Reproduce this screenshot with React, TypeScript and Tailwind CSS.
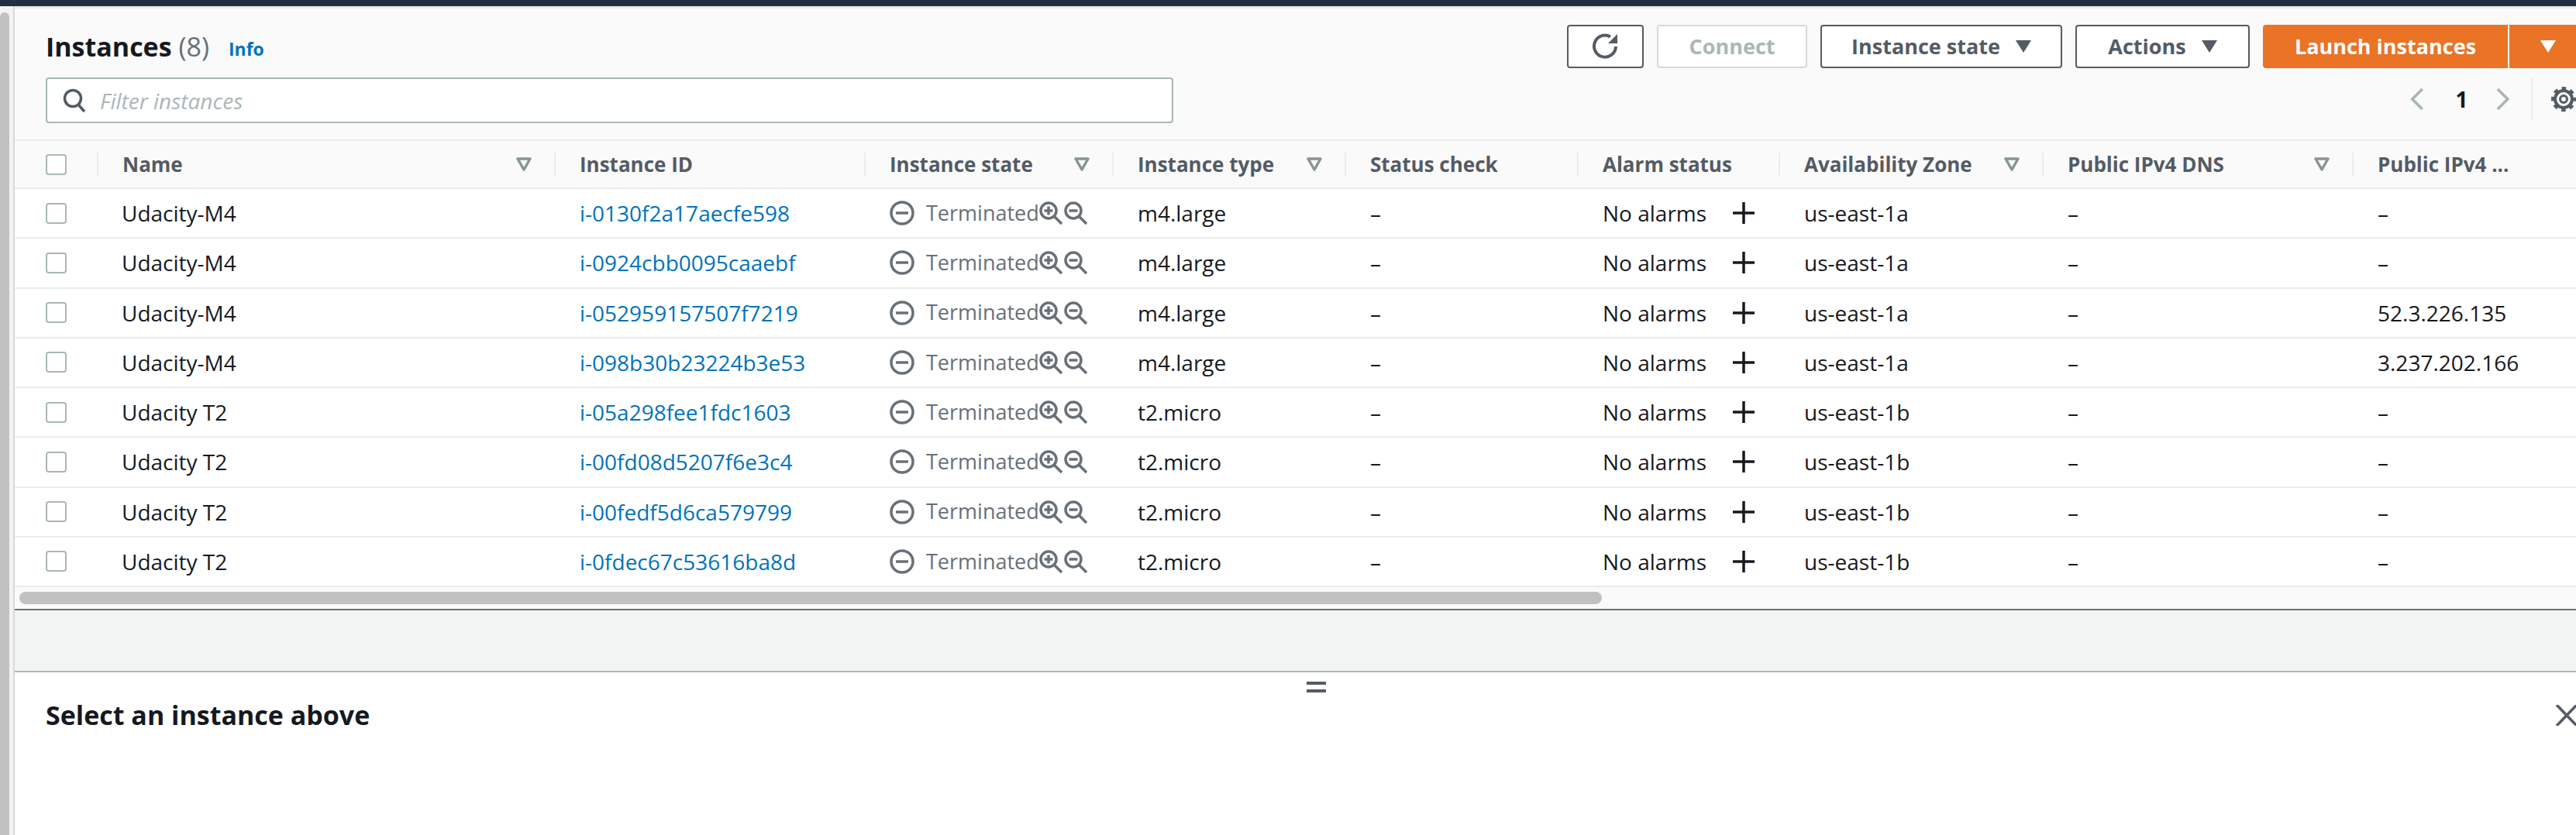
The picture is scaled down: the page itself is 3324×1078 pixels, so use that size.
const font = "font-['Open_Sans','Noto_Sans',sans-serif]"

const columns = 'grid grid-cols-[106px_590px_400px_320px_300px_300px_260px_340px_400px_360px]'

type Instance = {
  name: string
  id: string
  type: string
  zone: string
  ip: string
}

const instances: Instance[] = [
  { name: 'Udacity-M4', id: 'i-0130f2a17aecfe598', type: 'm4.large', zone: 'us-east-1a', ip: '–' },
  { name: 'Udacity-M4', id: 'i-0924cbb0095caaebf', type: 'm4.large', zone: 'us-east-1a', ip: '–' },
  { name: 'Udacity-M4', id: 'i-052959157507f7219', type: 'm4.large', zone: 'us-east-1a', ip: '52.3.226.135' },
  { name: 'Udacity-M4', id: 'i-098b30b23224b3e53', type: 'm4.large', zone: 'us-east-1a', ip: '3.237.202.166' },
  { name: 'Udacity T2', id: 'i-05a298fee1fdc1603', type: 't2.micro', zone: 'us-east-1b', ip: '–' },
  { name: 'Udacity T2', id: 'i-00fd08d5207f6e3c4', type: 't2.micro', zone: 'us-east-1b', ip: '–' },
  { name: 'Udacity T2', id: 'i-00fedf5d6ca579799', type: 't2.micro', zone: 'us-east-1b', ip: '–' },
  { name: 'Udacity T2', id: 'i-0fdec67c53616ba8d', type: 't2.micro', zone: 'us-east-1b', ip: '–' },
]

const headers = [
  { label: 'Name', sort: true },
  { label: 'Instance ID', sort: false },
  { label: 'Instance state', sort: true },
  { label: 'Instance type', sort: true },
  { label: 'Status check', sort: false },
  { label: 'Alarm status', sort: false },
  { label: 'Availability Zone', sort: true },
  { label: 'Public IPv4 DNS', sort: true },
  { label: 'Public IPv4 ...', sort: true },
]

function Checkbox() {
  return <div className="ml-[40px] h-[27px] w-[27px] rounded-[4px] border-2 border-[#aab7b8] bg-white" />
}

function SortIcon() {
  return (
    <svg viewBox="0 0 20 18" className="mr-[29px] ml-auto h-[18px] w-[20px] shrink-0">
      <path d="M2 2h16l-8 14z" fill="none" stroke="#879596" strokeWidth="3.5" strokeLinejoin="round" />
    </svg>
  )
}

function Caret({ color }: { color: string }) {
  return (
    <svg viewBox="0 0 20 16" className="h-[16px] w-[20px] shrink-0">
      <path d="M0 0h20l-10 16z" fill={color} />
    </svg>
  )
}

function Magnifier({ minus }: { minus?: boolean }) {
  return (
    <svg viewBox="0 0 30 30" className="h-[30px] w-[30px] shrink-0" fill="none" stroke="#687078" strokeWidth="3.5">
      <circle cx="12" cy="12" r="10" />
      <path d="M19 19l10 10" />
      <path d="M6.5 12h11" />
      {!minus && <path d="M12 6.5v11" />}
    </svg>
  )
}

function Row({ item }: { item: Instance }) {
  return (
    <div className={`${columns} h-[64.25px] border-b-2 border-[#eaeded] bg-white text-[28px] text-[#16191f]`}>
      <div className="flex items-center">
        <Checkbox />
      </div>
      <div className="flex items-center pl-[32px]">{item.name}</div>
      <div className="flex items-center pl-[33px] text-[#0073bb]">{item.id}</div>
      <div className="flex items-center pl-[33px] text-[27px] text-[#687078]">
        <svg viewBox="0 0 32 32" className="h-[32px] w-[32px] shrink-0" fill="none" stroke="#687078" strokeWidth="3.5">
          <circle cx="16" cy="16" r="14" />
          <path d="M8 16h16" />
        </svg>
        <span className="ml-[15px]">Terminated</span>
        <Magnifier />
        <span className="ml-[2px]">
          <Magnifier minus />
        </span>
      </div>
      <div className="flex items-center pl-[33px]">{item.type}</div>
      <div className="flex items-center pl-[33px]">–</div>
      <div className="flex items-center pl-[33px]">
        No alarms
        <svg viewBox="0 0 28 28" className="ml-[34px] h-[28px] w-[28px] shrink-0" stroke="#16191f" strokeWidth="3.5">
          <path d="M14 0v28M0 14h28" />
        </svg>
      </div>
      <div className="flex items-center pl-[33px]">{item.zone}</div>
      <div className="flex items-center pl-[33px]">–</div>
      <div className="flex items-center pl-[33px]">{item.ip}</div>
    </div>
  )
}

export default function App() {
  return (
    <div className={`${font} flex h-[1078px] w-[3324px] flex-col overflow-hidden bg-[#fafafa] text-[26px]`}>
      <div className="h-[8px] shrink-0 bg-[#232f3e]" />
      <div className="flex min-h-0 flex-1">
        {/* page scrollbar */}
        <div className="w-[17px] shrink-0 bg-[#f2f3f3] pt-[8px]">
          <div className="h-full w-[12px] rounded-t-[6px] bg-[#c1c1c1]" />
        </div>

        <div className="flex min-w-0 flex-1 flex-col border-l-2 border-[#d5dbdb]">
          {/* toolbar */}
          <div className="flex h-[174px] shrink-0 border-t-[3px] border-b-2 border-[#eaeded]">
            <div className="w-[2003px] shrink-0 pl-[40px]">
              <div className="flex h-[78px] items-center pt-[20px]">
                <h1 className="text-[34px] leading-none font-bold text-[#16191f]">
                  Instances <span className="font-normal text-[#687078]">(8)</span>
                </h1>
                <span className="ml-[25px] pt-[6px] text-[23px] font-bold text-[#0073bb]">Info</span>
              </div>
              <div className="mt-[11px] flex h-[59px] w-[1455px] items-center rounded-[4px] border-2 border-[#aab7b8] bg-white pl-[20px]">
                <svg viewBox="0 0 30 32" className="h-[32px] w-[30px]" fill="none" stroke="#545b64" strokeWidth="3.5">
                  <circle cx="13" cy="13" r="10.5" />
                  <path d="M20 21l8 9" />
                </svg>
                <span className="ml-[18px] text-[28px] text-[#aab7b8] italic">Filter instances</span>
              </div>
            </div>
            <div className="w-[1302px] shrink-0 overflow-hidden pt-[21px]">
              <div className="flex h-[56px] w-[1320px] items-stretch gap-[17px] text-[27px] font-bold text-[#545b64]">
                <button className="flex w-[99px] items-center justify-center rounded-[4px] border-2 border-[#545b64] bg-white">
                  <svg viewBox="0 0 34 34" className="h-[34px] w-[34px]" fill="none">
                    <path d="M23 4.5A14 14 0 1 0 30 17" stroke="#545b64" strokeWidth="4" />
                    <path d="M32 1v12H20z" fill="#545b64" />
                  </svg>
                </button>
                <button className="w-[194px] rounded-[4px] border-2 border-[#d5dbdb] bg-white text-[#aab7b8]">Connect</button>
                <button className="flex w-[312px] items-center justify-center gap-[20px] rounded-[4px] border-2 border-[#545b64] bg-white">
                  Instance state
                  <Caret color="#545b64" />
                </button>
                <button className="flex w-[225px] items-center justify-center gap-[20px] rounded-[4px] border-2 border-[#545b64] bg-white">
                  Actions
                  <Caret color="#545b64" />
                </button>
                <div className="flex gap-[2px]">
                  <button className="w-[316px] rounded-l-[4px] bg-[#ea7325] text-white">Launch instances</button>
                  <button className="flex w-[100px] items-center justify-center rounded-r-[4px] bg-[#ea7325]">
                    <Caret color="#ffffff" />
                  </button>
                </div>
              </div>
              <div className="mt-[12px] flex h-[56px] items-center pl-[1088px]">
                <svg viewBox="0 0 19 30" className="h-[30px] w-[19px]" fill="none" stroke="#aab7b8" strokeWidth="4">
                  <path d="M17 1L3 15l14 14" />
                </svg>
                <span className="ml-[41px] w-[10px] text-[28px] font-bold text-[#16191f]">1</span>
                <svg viewBox="0 0 19 30" className="ml-[42px] h-[30px] w-[19px]" fill="none" stroke="#aab7b8" strokeWidth="4">
                  <path d="M2 1l14 14L2 29" />
                </svg>
                <div className="ml-[28px] h-[56px] w-[2px] bg-[#eaeded]" />
                <svg viewBox="0 0 32 32" className="ml-[24px] h-[32px] w-[32px] shrink-0" fill="none" stroke="#545b64">
                  <circle cx="16" cy="16" r="11" strokeWidth="4" />
                  <circle cx="16" cy="16" r="14" strokeWidth="4" strokeDasharray="5.5 5.5" strokeDashoffset="2.75" />
                  <circle cx="16" cy="16" r="4.5" strokeWidth="3" />
                </svg>
              </div>
            </div>
          </div>

          {/* table */}
          <div className={`${columns} h-[62px] shrink-0 border-b-2 border-[#eaeded] font-bold text-[#545b64]`}>
            <div className="flex items-center">
              <Checkbox />
            </div>
            {headers.map((h) => (
              <div key={h.label} className="flex min-w-0 items-center whitespace-nowrap">
                <div className="mr-[31px] h-[30px] w-[2px] shrink-0 bg-[#eaeded]" />
                {h.label}
                {h.sort && <SortIcon />}
              </div>
            ))}
          </div>
          {instances.map((item) => (
            <Row key={item.id} item={item} />
          ))}

          {/* table scrollbar */}
          <div className="h-[30px] shrink-0 border-b-2 border-[#687078] pt-[6px] pl-[6px]">
            <div className="h-[16px] w-[2042px] rounded-[8px] bg-[#c1c1c1]" />
          </div>

          <div className="h-[80px] shrink-0 border-b-2 border-[#aab7b8] bg-[#f2f3f3]" />

          {/* split panel */}
          <div className="min-h-0 flex-1 bg-white">
            <div className="mt-[12px] ml-[1667px] flex w-[25px] flex-col gap-[6px]">
              <div className="h-[4px] bg-[#545b64]" />
              <div className="h-[4px] bg-[#545b64]" />
            </div>
            <div className="flex items-center justify-between pt-[9px] pl-[40px]">
              <h2 className="text-[34px] leading-[40px] font-bold text-[#16191f]">Select an instance above</h2>
              <svg viewBox="0 0 30 27" className="mr-[-3px] h-[27px] w-[30px]" fill="none" stroke="#545b64" strokeWidth="3.5">
                <path d="M2 0l26 27M28 0L2 27" />
              </svg>
            </div>
          </div>
        </div>
      </div>
    </div>
  )
}
